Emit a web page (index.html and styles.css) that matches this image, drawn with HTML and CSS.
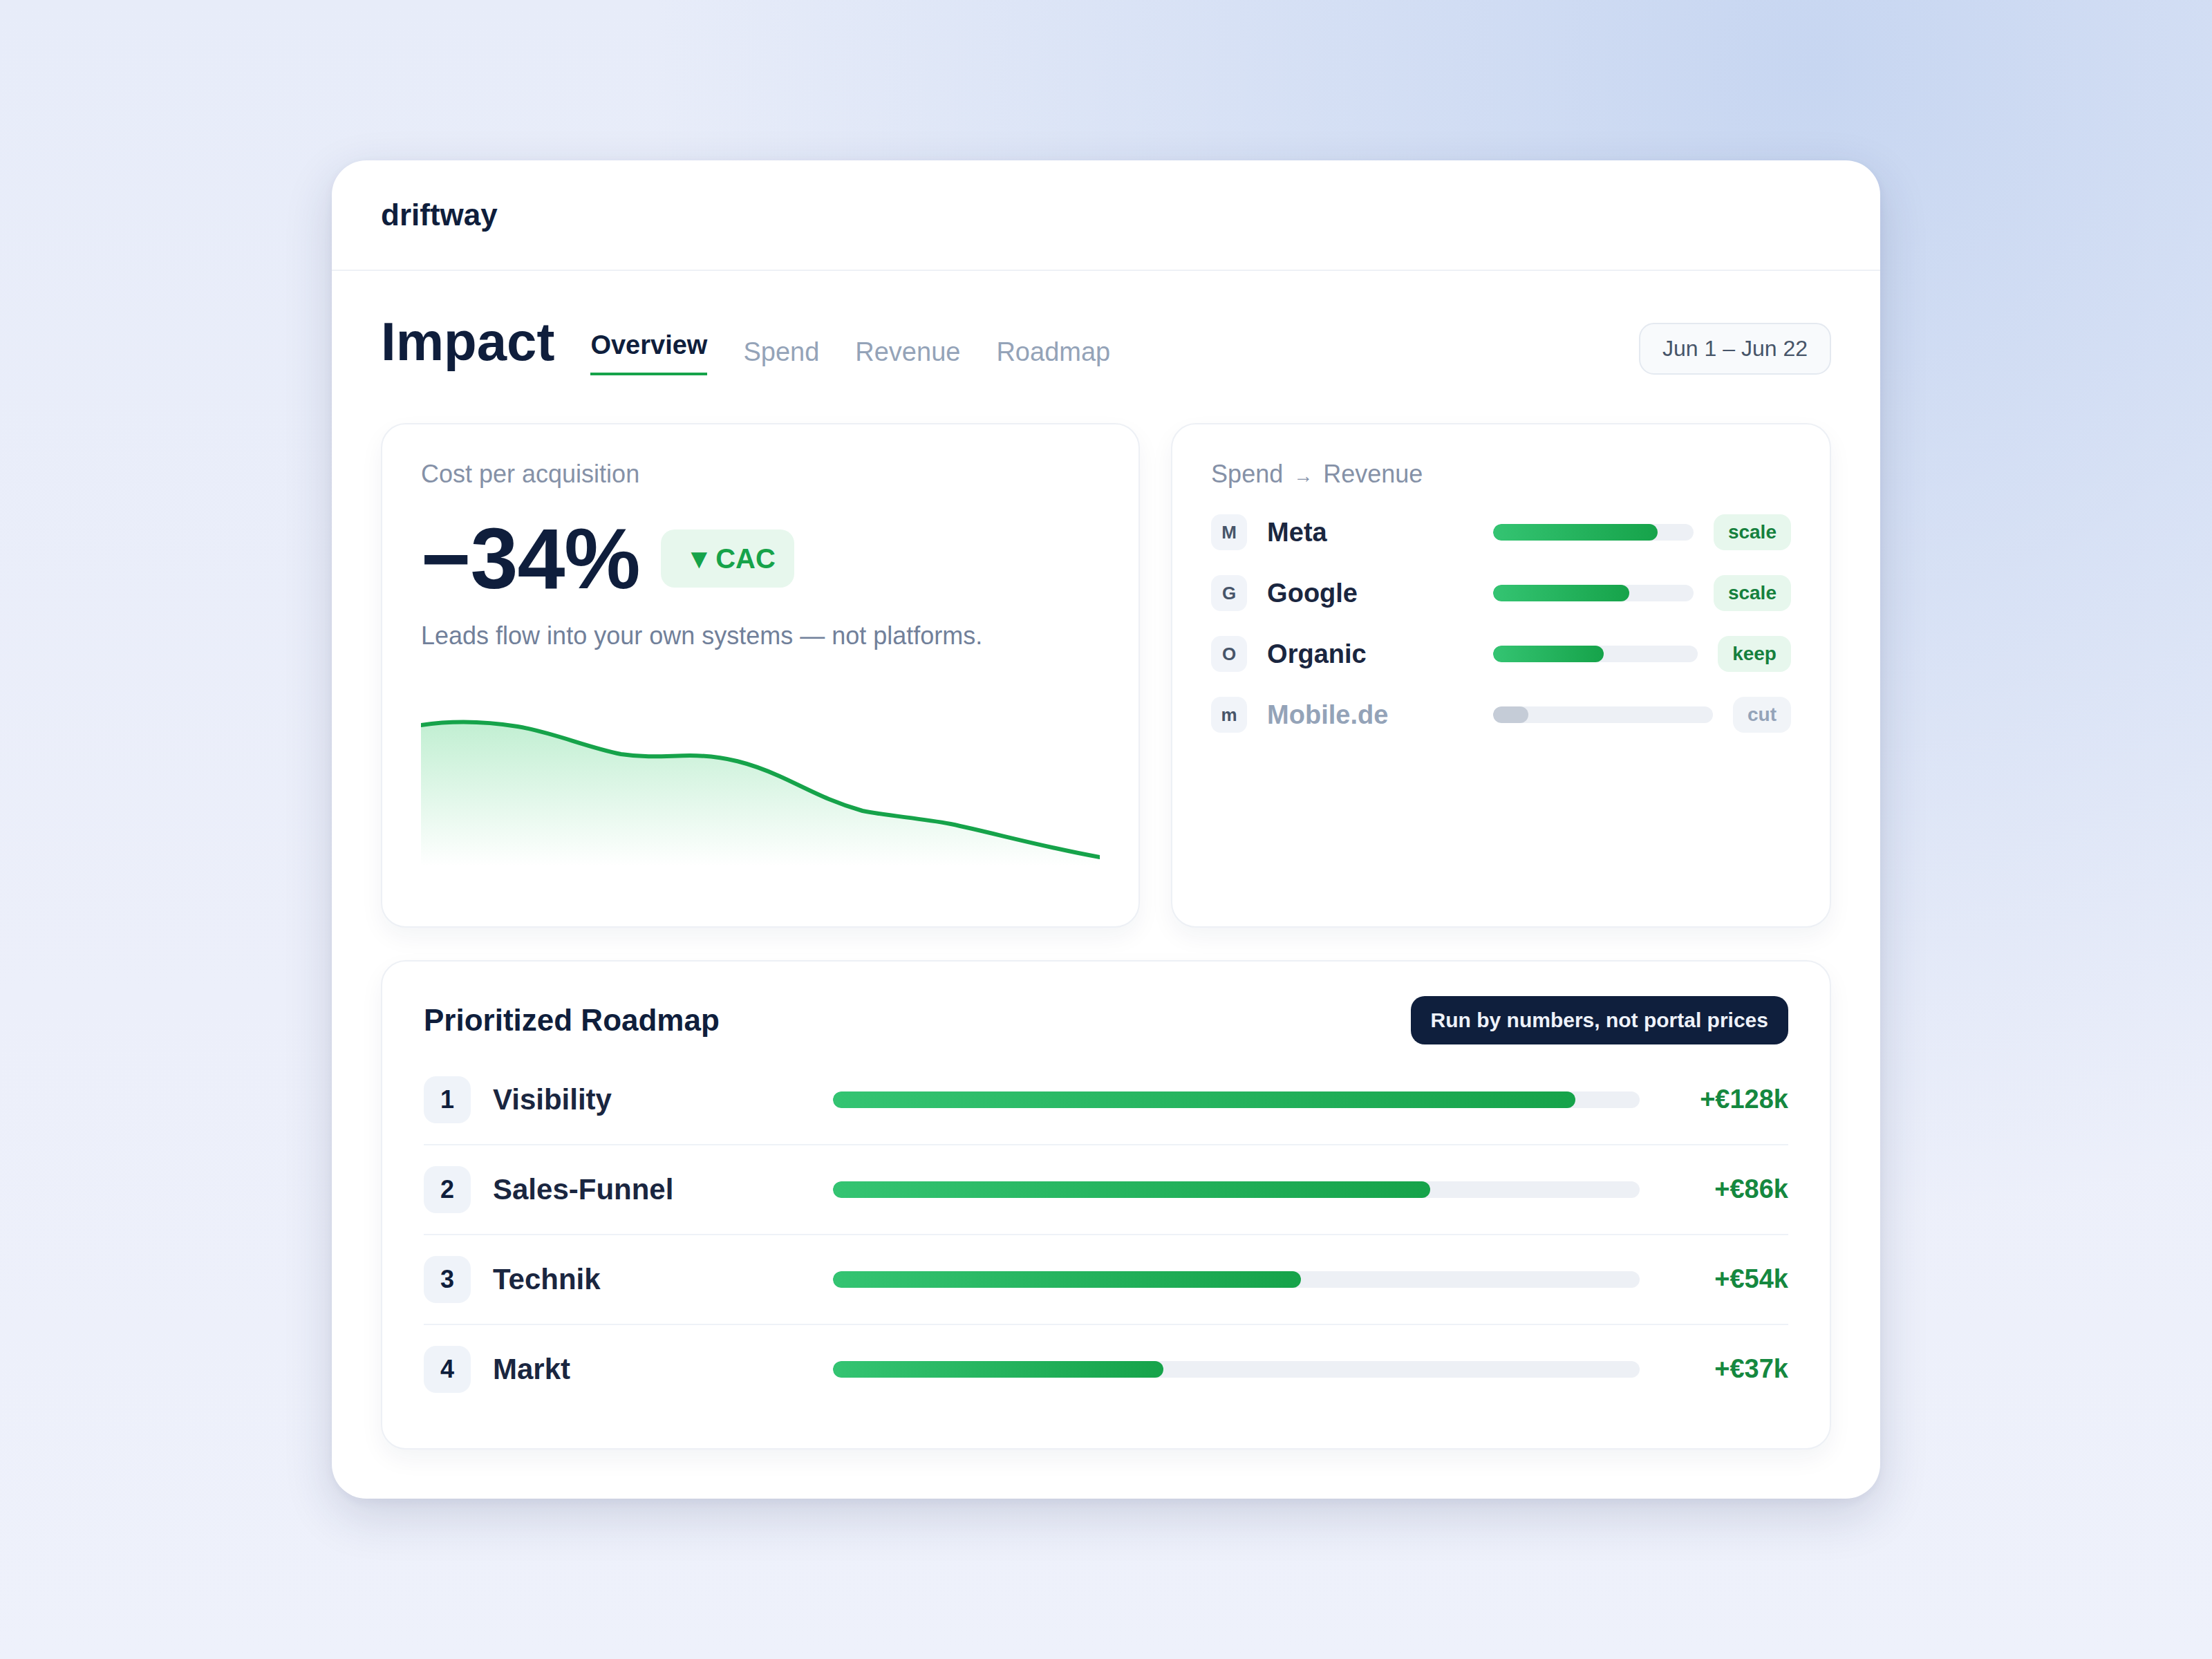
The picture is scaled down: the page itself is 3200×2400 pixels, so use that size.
FILE: index.html
```html
<!DOCTYPE html>
<html lang="en">
<head>
  <meta charset="UTF-8" />
  <meta name="viewport" content="width=device-width,initial-scale=1.0" />
  <title>driftway | Impact</title>
  <link rel="stylesheet" href="styles.css">
</head>
<body>
  <div class="shell">
    <header class="topbar">
      <span class="brand">driftway</span>
    </header>

    <main class="content">
      <!-- title + tabs -->
      <div class="title-row">
        <h1>Impact</h1>
        <nav class="tabs">
          <a class="tab active">Overview</a>
          <a class="tab">Spend</a>
          <a class="tab">Revenue</a>
          <a class="tab">Roadmap</a>
        </nav>
        <div class="range">Jun 1 – Jun 22</div>
      </div>

      <section class="cards">
        <!-- CAC -->
        <div class="panel cac">
          <p class="label">Cost per acquisition</p>
          <div class="kpi-row">
            <span class="kpi">−34%</span>
            <span class="delta"><span class="tri">▼</span> CAC</span>
          </div>
          <p class="sub">Leads flow into your own systems — not platforms.</p>
          <svg class="chart" viewBox="0 0 984 259" preserveAspectRatio="none">
            <defs>
              <linearGradient id="area" x1="0" y1="0" x2="0" y2="1">
                <stop offset="0" stop-color="#22c55e" stop-opacity=".28"/>
                <stop offset=".85" stop-color="#22c55e" stop-opacity="0"/>
              </linearGradient>
            </defs>
            <path fill="url(#area)" d="M0,18 C40,12 90,12 140,20 C190,28 240,50 290,60 C330,66 360,62 390,62 C440,62 480,74 520,92 C560,110 590,128 640,142 C680,150 720,152 768,161 C830,174 900,194 984,209 L984,259 L0,259 Z"/>
            <path fill="none" stroke="#16a34a" stroke-width="6" stroke-linecap="round" vector-effect="non-scaling-stroke" d="M0,18 C40,12 90,12 140,20 C190,28 240,50 290,60 C330,66 360,62 390,62 C440,62 480,74 520,92 C560,110 590,128 640,142 C680,150 720,152 768,161 C830,174 900,194 984,209"/>
          </svg>
        </div>

        <!-- spend -> revenue -->
        <div class="panel sources">
          <p class="label">Spend <span class="arrow">→</span> Revenue</p>
          <ul class="src-list">
            <li class="src">
              <span class="src-ico">M</span>
              <span class="src-name">Meta</span>
              <span class="track"><span class="fill" style="width:82%"></span></span>
              <span class="tag">scale</span>
            </li>
            <li class="src">
              <span class="src-ico">G</span>
              <span class="src-name">Google</span>
              <span class="track"><span class="fill" style="width:68%"></span></span>
              <span class="tag">scale</span>
            </li>
            <li class="src">
              <span class="src-ico">O</span>
              <span class="src-name">Organic</span>
              <span class="track"><span class="fill" style="width:54%"></span></span>
              <span class="tag">keep</span>
            </li>
            <li class="src muted">
              <span class="src-ico">m</span>
              <span class="src-name">Mobile.de</span>
              <span class="track"><span class="fill" style="width:16%"></span></span>
              <span class="tag">cut</span>
            </li>
          </ul>
        </div>
      </section>

      <!-- roadmap -->
      <section class="panel roadmap">
        <div class="rm-head">
          <h2>Prioritized Roadmap</h2>
          <span class="pill-dark">Run by numbers, not portal prices</span>
        </div>
        <ol class="rm-list">
          <li class="rm-row">
            <span class="num">1</span>
            <span class="rm-name">Visibility</span>
            <span class="track"><span class="fill" style="width:92%"></span></span>
            <span class="gain">+€128k</span>
          </li>
          <li class="rm-row">
            <span class="num">2</span>
            <span class="rm-name">Sales-Funnel</span>
            <span class="track"><span class="fill" style="width:74%"></span></span>
            <span class="gain">+€86k</span>
          </li>
          <li class="rm-row">
            <span class="num">3</span>
            <span class="rm-name">Technik</span>
            <span class="track"><span class="fill" style="width:58%"></span></span>
            <span class="gain">+€54k</span>
          </li>
          <li class="rm-row">
            <span class="num">4</span>
            <span class="rm-name">Markt</span>
            <span class="track"><span class="fill" style="width:41%"></span></span>
            <span class="gain">+€37k</span>
          </li>
        </ol>
      </section>
    </main>
  </div>
</body>
</html>
```

FILE: styles.css
```css
:root{
  --ink:#0f1e3c;
  --ink-2:#1a2640;
  --muted:#8591a7;
  --soft:#94a3b8;
  --line:#edf0f5;
  --green:#16a34a;
  --green-dk:#15803d;
  --green-bg:#e7f7ed;
  --track:#edf0f5;
}
*{box-sizing:border-box;}
body{
  margin:0;
  min-height:2400px;
  display:flex;
  align-items:center;
  justify-content:center;
  font-family:"Liberation Sans",Arial,sans-serif;
  color:var(--ink);
  background:
    radial-gradient(circle at 82% 4%,#c7d6f1 0%,rgba(199,214,241,0) 48%),
    linear-gradient(180deg,#e7ecf9 0%,#eceffa 60%,#eef1fb 100%);
}
p,h1,h2,ul,ol{margin:0;padding:0;}
ul,ol{list-style:none;}

/* outer card */
.shell{
  width:2240px;
  background:#fff;
  border-radius:50px;
  box-shadow:0 24px 70px rgba(30,45,90,.16),0 4px 14px rgba(30,45,90,.05);
  overflow:hidden;
}
.topbar{
  height:160px;
  display:flex;
  align-items:center;
  padding:0 71px;
  border-bottom:2px solid #eef1f6;
}
.brand{font-size:44px;font-weight:700;color:var(--ink);}

.content{padding:63px 71px 71px;}

/* title row */
.title-row{display:flex;align-items:flex-start;}
h1{font-size:78px;line-height:1;font-weight:700;}
.tabs{display:flex;align-items:center;gap:52px;margin:22px 0 0 52px;}
.tab{font-size:38px;line-height:1.2;color:var(--soft);}
.tab.active{
  font-weight:700;
  color:var(--ink);
  padding-bottom:16px;
  border-bottom:4px solid var(--green);
}
.range{
  margin:12px 0 0 auto;
  height:75px;
  display:flex;
  align-items:center;
  padding:0 32px;
  font-size:32px;
  color:#475569;
  background:#f8fafc;
  border:2px solid #e4e9f0;
  border-radius:22px;
}

/* panels */
.cards{
  display:grid;
  grid-template-columns:1.15fr 1fr;
  gap:45px;
  margin-top:69px;
}
.panel{
  background:#fff;
  border:2px solid var(--line);
  border-radius:36px;
  box-shadow:0 14px 34px rgba(20,35,70,.05);
  padding:50px 56px;
}
.label{font-size:36px;line-height:1.2;color:var(--muted);}
.arrow{font-size:28px;padding:0 5px;}

.kpi-row{display:flex;align-items:center;height:124px;margin-top:39px;}
.kpi{font-size:124px;line-height:1;font-weight:700;letter-spacing:-1px;}
.delta{
  margin-left:30px;
  height:84px;
  display:inline-flex;
  align-items:center;
  padding:0 27px 0 36px;
  border-radius:20px;
  background:var(--green-bg);
  color:var(--green);
  font-size:40px;
  font-weight:700;
}
.tri{font-size:40px;margin-right:4px;}
.sub{margin-top:25px;font-size:36px;line-height:1.4;color:#71809a;}
.chart{display:block;width:100%;height:259px;margin-top:85px;}

/* spend -> revenue */
.src-list{margin-top:37px;display:flex;flex-direction:column;gap:36px;}
.src{display:flex;align-items:center;gap:29px;height:52px;}
.src-ico{
  flex:none;
  width:52px;height:52px;
  display:flex;align-items:center;justify-content:center;
  border-radius:14px;
  background:#f1f4f9;
  color:#475569;
  font-size:26px;
  font-weight:700;
}
.src-name{flex:none;width:298px;font-size:38px;font-weight:700;color:var(--ink-2);}
.track{
  flex:1;
  height:24px;
  border-radius:12px;
  background:var(--track);
  overflow:hidden;
}
.fill{
  display:block;
  height:100%;
  border-radius:12px;
  background:linear-gradient(90deg,#34c472,#16a34a);
}
.tag{
  flex:none;
  height:52px;
  display:flex;align-items:center;
  padding:0 21px;
  border-radius:16px;
  background:var(--green-bg);
  color:var(--green-dk);
  font-size:28px;
  font-weight:700;
}
.src.muted .src-name{color:var(--soft);}
.src.muted .fill{background:#c5ccd7;}
.src.muted .tag{background:#f1f4f8;color:var(--soft);}

/* roadmap */
.roadmap{margin-top:47px;padding:50px 60px;}
.rm-head{display:flex;align-items:center;justify-content:space-between;height:70px;}
h2{font-size:44px;font-weight:700;color:var(--ink);}
.pill-dark{
  height:70px;
  display:flex;align-items:center;
  padding:0 29px;
  border-radius:20px;
  background:#0f1f3d;
  color:#eef2fa;
  font-size:30px;
  font-weight:700;
}
.rm-list{margin-top:16px;}
.rm-row{
  display:grid;
  grid-template-columns:68px 460px 1fr 183px;
  column-gap:32px;
  align-items:center;
  padding:30px 0;
  border-bottom:2px solid #eef2f7;
}
.rm-row:last-child{border-bottom:0;}
.num{
  width:68px;height:68px;
  display:flex;align-items:center;justify-content:center;
  border-radius:18px;
  background:#eff3f9;
  font-size:36px;
  font-weight:700;
  color:var(--ink);
}
.rm-name{font-size:42px;font-weight:700;color:var(--ink-2);}
.gain{text-align:right;font-size:38px;font-weight:700;color:#15883f;}
```
